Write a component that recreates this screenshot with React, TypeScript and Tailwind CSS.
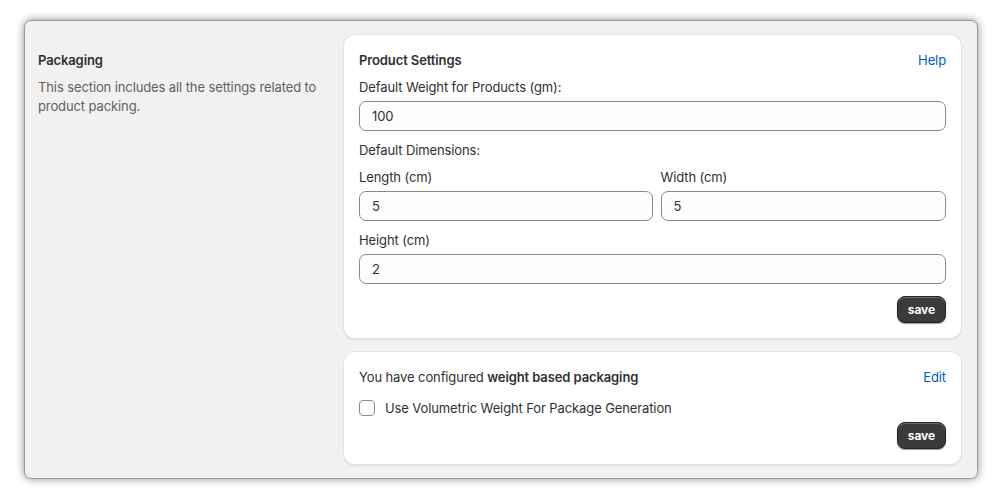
import React, { useState } from 'react';

const font = { fontFamily: 'Inter, "Noto Sans", sans-serif', letterSpacing: '-0.11px' };

function Field({ label, value, className = '' }: { label: string; value: string; className?: string }) {
  const [v, setV] = useState(value);
  return (
    <div className={className}>
      <label className="block text-[13px] leading-5 text-[#303030]">{label}</label>
      <input
        value={v}
        onChange={(e) => setV(e.target.value)}
        className="mt-1 block h-[30px] w-full rounded-[7px] border border-[#8a8a8a] bg-[#fdfdfd] px-3 text-[13px] text-[#303030] outline-none"
      />
    </div>
  );
}

function SaveButton() {
  return (
    <button className="h-[27px] rounded-[8px] border border-[#222] bg-[#3b3b3b] px-[10px] text-[12px] font-bold text-white shadow-[inset_0_1px_0_rgba(255,255,255,0.25),0_1px_1px_rgba(0,0,0,0.4)]">
      save
    </button>
  );
}

export default function App() {
  const [volumetric, setVolumetric] = useState(false);

  return (
    <div className="min-h-[500px] w-[1000px] bg-white pl-[24px] pr-[22px] pt-[20px]" style={font}>
      <div className="flex gap-[15px] rounded-[7px] border border-[#9a9a9a] bg-[#f1f1f1] pb-[13px] pl-[13px] pr-[15px] pt-[13px] shadow-[0_0_8px_rgba(0,0,0,0.45)]">
        {/* Left description */}
        <div className="w-[290px] pt-[16px]">
          <h2 className="text-[13px] font-semibold leading-5 text-[#303030]">Packaging</h2>
          <p className="mt-[8px] text-[13px] leading-[19px] text-[#616161]">
            This section includes all the settings related to product packing.
          </p>
        </div>

        <div className="flex flex-1 flex-col gap-[12px]">
          {/* Product settings card */}
          <div className="rounded-[12px] border border-[#e3e3e3] bg-white px-[15px] pb-[15px] pt-[15px] shadow-[0_1px_1px_rgba(0,0,0,0.08)]">
            <div className="flex items-center justify-between">
              <h3 className="text-[13px] font-semibold leading-5 text-[#303030]">Product Settings</h3>
              <a href="#" className="text-[13px] leading-5 text-[#005bd3]">Help</a>
            </div>
            <Field label="Default Weight for Products (gm):" value="100" className="mt-[7px]" />
            <p className="mt-[9px] text-[13px] leading-5 text-[#303030]">Default Dimensions:</p>
            <div className="mt-[7px] flex gap-2">
              <Field label="Length (cm)" value="5" className="w-1/2" />
              <Field label="Width (cm)" value="5" className="flex-1" />
            </div>
            <Field label="Height (cm)" value="2" className="mt-[9px]" />
            <div className="mt-[12px] flex justify-end">
              <SaveButton />
            </div>
          </div>

          {/* Packaging mode card */}
          <div className="rounded-[12px] border border-[#e3e3e3] bg-white px-[15px] pb-[15px] pt-[15px] shadow-[0_1px_1px_rgba(0,0,0,0.08)]">
            <div className="flex items-center justify-between">
              <p className="text-[13px] leading-5 text-[#303030]">
                You have configured <span className="font-semibold">weight based packaging</span>
              </p>
              <a href="#" className="text-[13px] leading-5 text-[#005bd3]">Edit</a>
            </div>
            <label className="mt-[11px] flex cursor-pointer items-center gap-[10px]">
              <input
                type="checkbox"
                checked={volumetric}
                onChange={(e) => setVolumetric(e.target.checked)}
                className="h-4 w-4 appearance-none rounded-[4px] border border-[#8a8a8a] bg-white checked:bg-[#303030]"
              />
              <span className="text-[13px] leading-5 text-[#303030]">Use Volumetric Weight For Package Generation</span>
            </label>
            <div className="mt-[4px] flex justify-end">
              <SaveButton />
            </div>
          </div>
        </div>
      </div>
    </div>
  );
}
